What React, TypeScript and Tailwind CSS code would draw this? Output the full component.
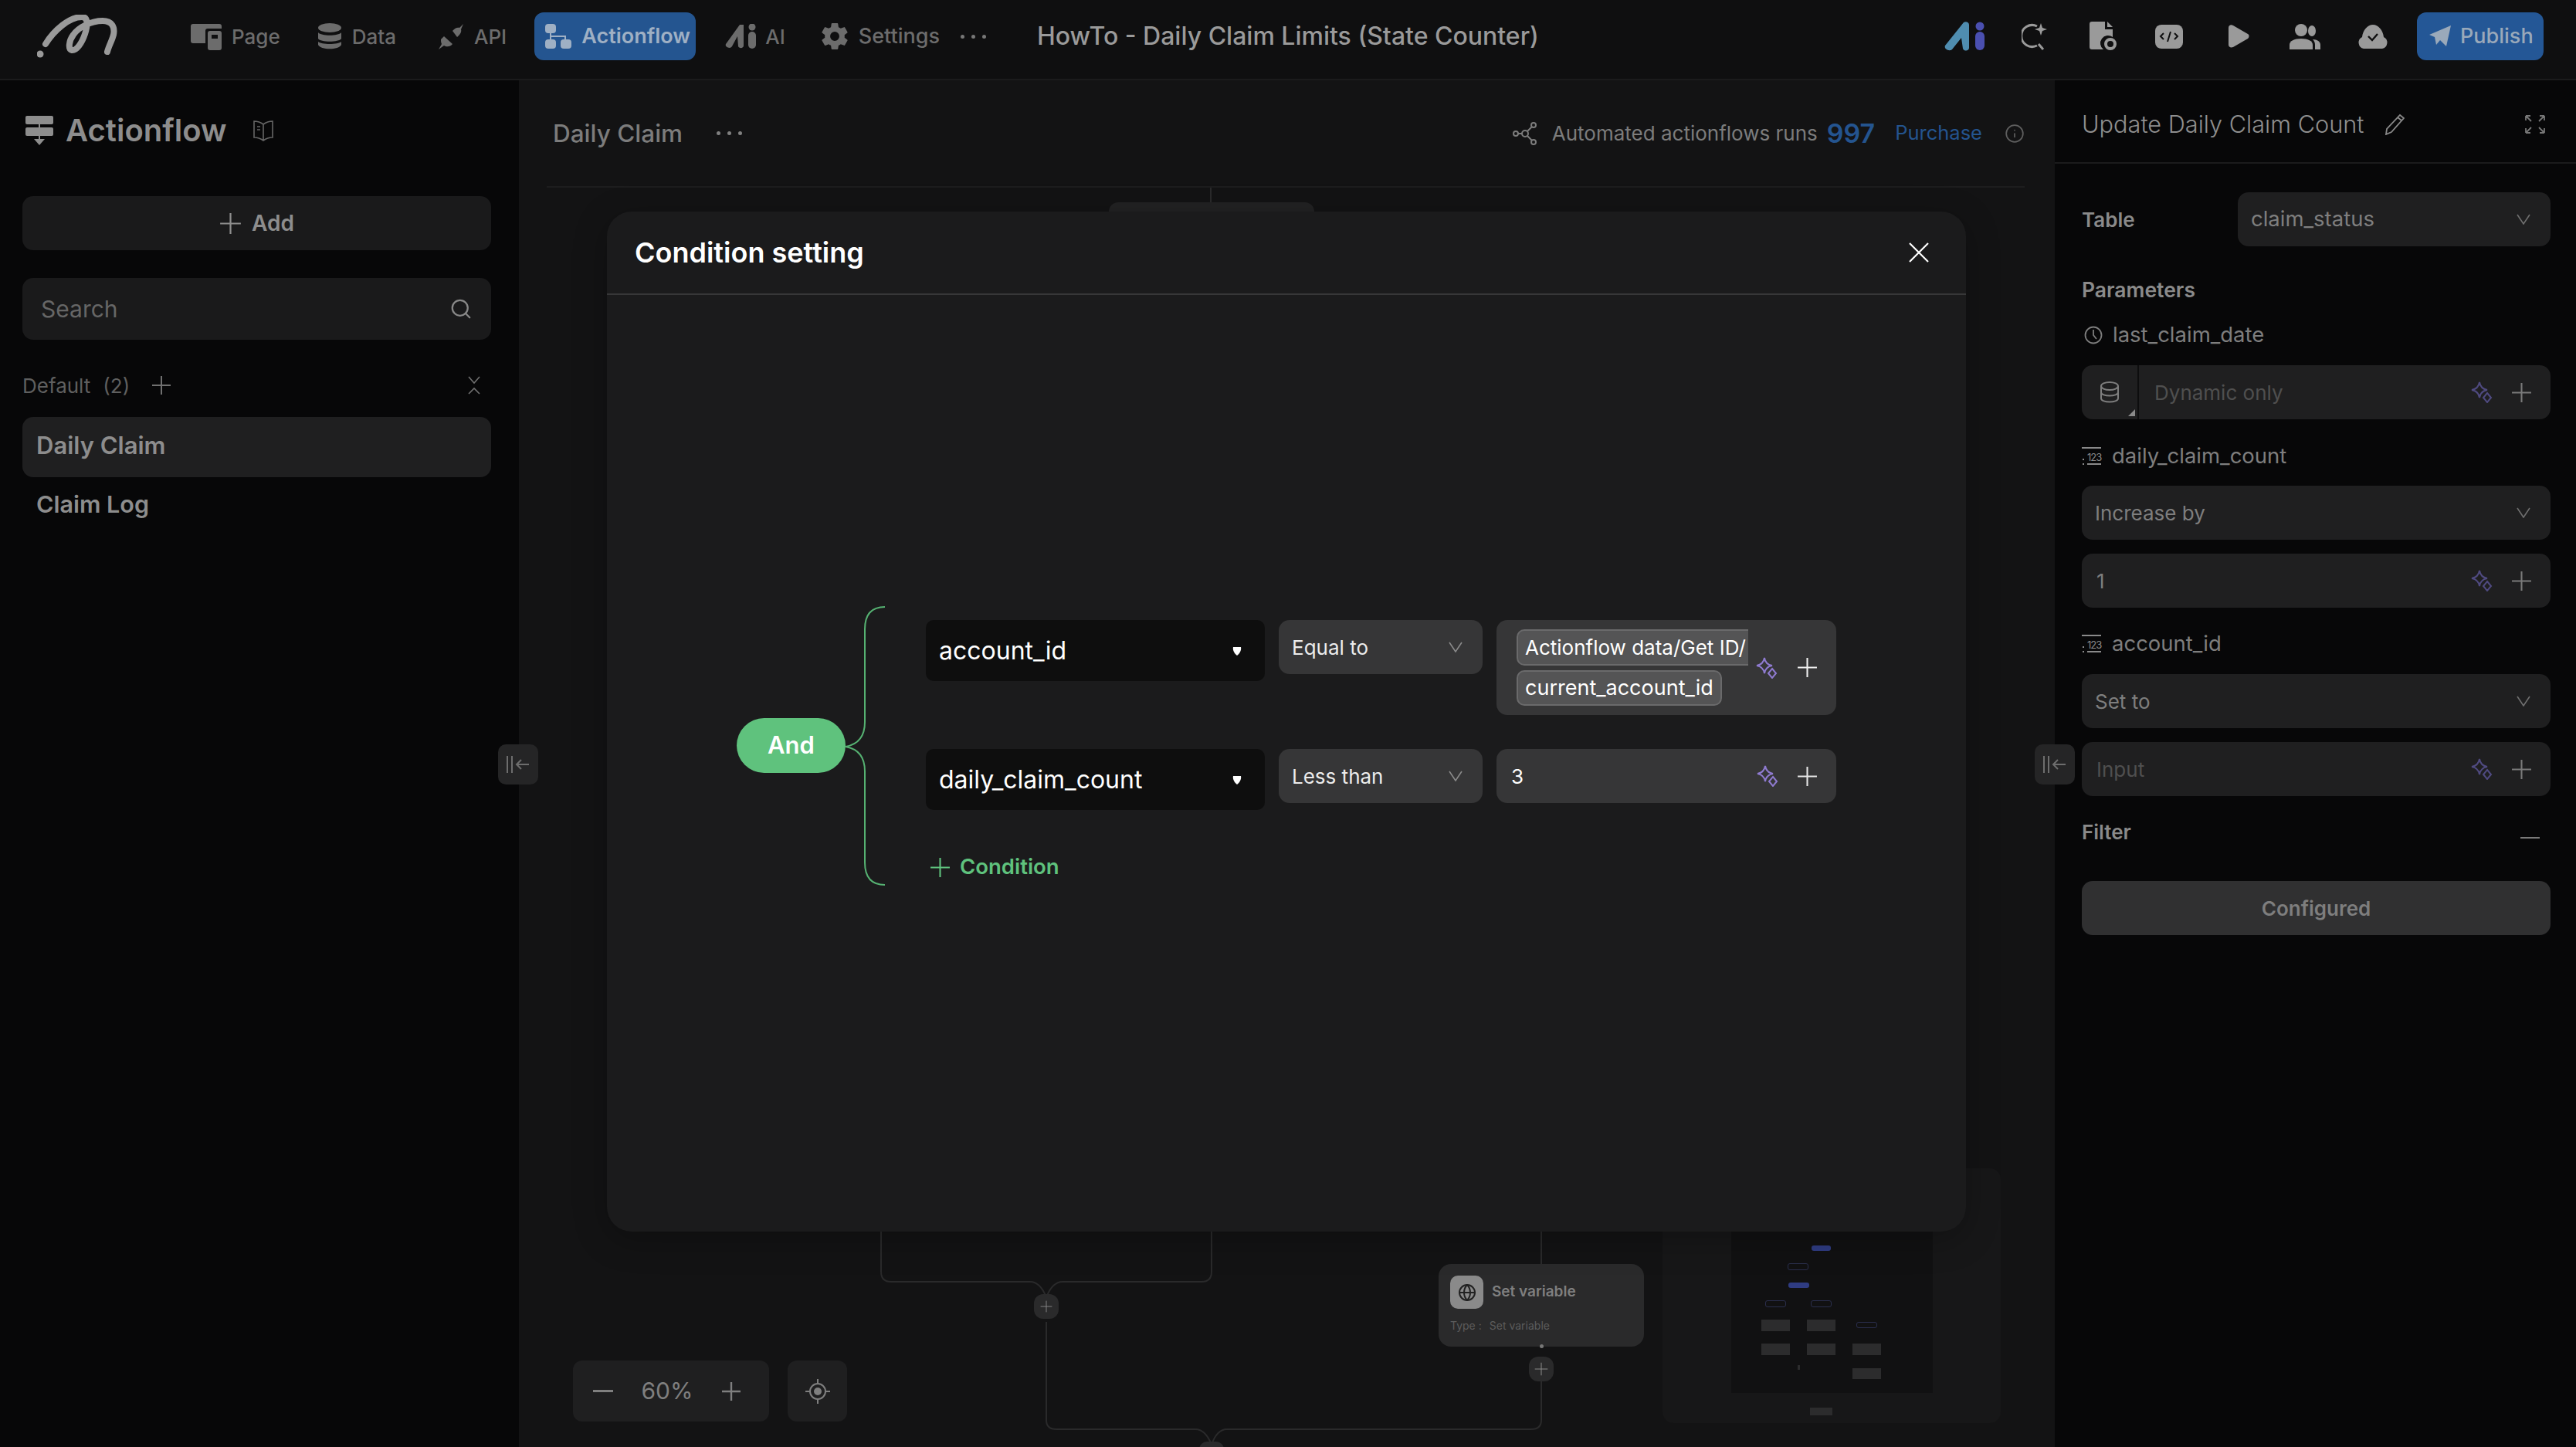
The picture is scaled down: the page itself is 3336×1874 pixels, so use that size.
import { Globe, Info, Search } from 'lucide-react';
import { IoSettingsSharp } from 'react-icons/io5';

function PlusIcon({ size = 26, color = '#9a9a9a', sw = 2 }: { size?: number; color?: string; sw?: number }) {
  return (
    <svg width={size} height={size} viewBox="0 0 26 26" fill="none" stroke={color} strokeWidth={sw} className="shrink-0">
      <path d="M13 1v24M1 13h24" />
    </svg>
  );
}

function Sparkle({ color }: { color: string }) {
  return (
    <svg width="28" height="28" viewBox="0 0 28 28" fill="none" stroke={color} strokeWidth="2" className="shrink-0">
      <path d="M11 1c1 6 4 9 10 10-6 1-9 4-10 10-1-6-4-9-10-10 6-1 9-4 10-10z" />
      <path d="M21 15l5 6-5 6-5-6z" />
    </svg>
  );
}

function Chevron({ color = '#6f6f6f' }: { color?: string }) {
  return (
    <svg width="18" height="14" viewBox="0 0 18 14" fill="none" stroke={color} strokeWidth="1.6" className="shrink-0">
      <path d="M1 1l8 12 8-12" />
    </svg>
  );
}

function NumberIcon() {
  return (
    <div className="relative h-[24px] w-[28px] shrink-0 text-[#8a8a8a]">
      <div className="absolute left-0 top-0 h-[2px] w-[25px] bg-[#8a8a8a]" />
      <div className="absolute bottom-[7px] left-[1px] h-[2px] w-[2px] bg-[#8a8a8a]" />
      <div className="absolute bottom-[1px] left-[1px] h-[2px] w-[2px] bg-[#8a8a8a]" />
      <span className="absolute bottom-[1px] left-[7px] border-b-2 border-[#8a8a8a] text-[13px] leading-[15px] tracking-[-1px]">123</span>
    </div>
  );
}

function Logo() {
  return (
    <svg width="104" height="56" viewBox="0 0 104 56" fill="none" stroke="#9a9a9a" strokeLinecap="round" className="shrink-0">
      <circle cx="4" cy="51" r="4.5" fill="#9a9a9a" stroke="none" />
      <path d="M11 38C22 20 42 3 58 3c8 0 8 10 4 22-4 12-11 22-17 21-5-1-4-12 2-20C54 16 70 8 85 8c12 0 16 8 14 18-2 8-6 14-8 22" strokeWidth="8" />
    </svg>
  );
}

function NavIcon({ name }: { name: string }) {
  const c = '#6c6c6c';
  if (name === 'Page')
    return (
      <svg width="40" height="36" viewBox="0 0 40 36" fill={c} className="shrink-0">
        <path d="M3 2h34a3 3 0 013 3v3H22a3 3 0 00-3 3v16H3a3 3 0 01-3-3V5a3 3 0 013-3z" />
        <rect x="22" y="11" width="18" height="25" rx="3" />
        <rect x="27" y="16" width="8" height="5" fill="#0f0f10" />
      </svg>
    );
  if (name === 'Data')
    return (
      <svg width="32" height="34" viewBox="0 0 32 34" fill={c} className="shrink-0">
        <ellipse cx="16" cy="6" rx="15" ry="6" />
        <path d="M1 12c4 5 26 5 30 0v8c-3 5-27 5-30 0zM1 24c4 4 26 4 30 0v4c-3 7-27 7-30 0z" />
      </svg>
    );
  if (name === 'API')
    return (
      <svg width="34" height="34" viewBox="0 0 34 34" fill={c} className="shrink-0">
        <path d="M19 10c3-4 7-5 9-4l5-5-3 7c1 3-1 7-5 10z" />
        <path d="M4 21l4-4 11 10c-3 4-8 4-11 2l-7 5 4-7c-1-2-1-4-1-6z" />
      </svg>
    );
  if (name === 'Actionflow')
    return (
      <svg width="34" height="32" viewBox="0 0 34 32" fill="#9fb0c4" stroke="none" className="shrink-0">
        <rect x="0" y="0" width="14" height="12" rx="4" />
        <rect x="0" y="20" width="14" height="12" rx="4" />
        <rect x="20" y="20" width="14" height="12" rx="4" />
        <path d="M6 10h2v5h19v6h-2v-4H8v4H6z" />
      </svg>
    );
  if (name === 'AI')
    return (
      <svg width="41" height="32" viewBox="0 0 41 32" fill={c} className="shrink-0">
        <path d="M19 1h5v27c0 4-6 4-7 1l-1-13-7 13c-2 4-10 1-8-3z" />
        <rect x="30" y="10" width="10" height="22" rx="5" />
        <circle cx="35" cy="4" r="4.5" />
      </svg>
    );
  return <IoSettingsSharp size={38} color={c} className="shrink-0" />;
}

function TopIcon({ name }: { name: string }) {
  const c = '#9a9a9a';
  if (name === 'ai')
    return (
      <svg width="54" height="38" viewBox="0 0 54 38" className="shrink-0">
        <path d="M25 1c3-2 7 0 7 3v30c0 4-6 5-8 1l-2-14-12 15c-3 3-11 0-9-5z" fill="#4f8db0" />
        <rect x="40" y="13" width="12" height="24" rx="6" fill="#4a4fb0" />
        <circle cx="46" cy="6" r="5.5" fill="#4a4fb0" />
      </svg>
    );
  if (name === 'search')
    return (
      <svg width="34" height="36" viewBox="0 0 34 36" fill="none" stroke={c} strokeWidth="3" className="ml-[46px] shrink-0">
        <path d="M20 5a14 14 0 100 25" />
        <path d="M22 28l6 7" />
        <path d="M25 1l2 6 6 2-6 2-2 6-2-6-6-2 6-2z" fill={c} stroke="none" />
      </svg>
    );
  if (name === 'doc')
    return (
      <svg width="36" height="38" viewBox="0 0 36 38" fill={c} className="ml-[54px] shrink-0">
        <path d="M3 0h17v10h10v10a10 10 0 00-12 16H3a3 3 0 01-3-3V3a3 3 0 013-3z" />
        <path d="M23 0l7 7h-7z" />
        <circle cx="27" cy="29" r="6" fill="none" stroke={c} strokeWidth="4" />
      </svg>
    );
  if (name === 'code')
    return (
      <svg width="36" height="31" viewBox="0 0 36 31" className="ml-[49px] shrink-0">
        <rect width="36" height="31" rx="8" fill={c} />
        <path d="M11 11l-4 4 4 4M25 11l4 4-4 4M20 9l-4 13" fill="none" stroke="#0f0f10" strokeWidth="2" />
      </svg>
    );
  if (name === 'play')
    return (
      <svg width="27" height="30" viewBox="0 0 27 30" fill={c} className="ml-[59px] shrink-0">
        <path d="M0 4c0-3 3-5 6-3l19 11c2 1 2 4 0 6L6 29c-3 1-6 0-6-3z" />
      </svg>
    );
  if (name === 'users')
    return (
      <svg width="40" height="33" viewBox="0 0 40 33" fill={c} className="ml-[52px] shrink-0">
        <ellipse cx="15" cy="8" rx="8" ry="8" />
        <path d="M0 33v-6c0-5 6-8 15-8s15 3 15 8v6z" />
        <ellipse cx="29" cy="9" rx="5" ry="7" />
        <path d="M33 33v-6c0-3-1-5-3-7 6 0 10 3 10 7v6z" />
      </svg>
    );
  return (
    <svg width="40" height="31" viewBox="0 0 40 31" className="ml-[48px] shrink-0">
      <path d="M8 31a8 8 0 01-2-15C7 7 13 0 20 0s13 7 14 16a8 8 0 01-2 15z" fill={c} />
      <path d="M14 15l5 5 7-8" fill="none" stroke="#0f0f10" strokeWidth="2.4" />
    </svg>
  );
}

const navItems = [
  { name: 'Page', gap: 'mr-[48px]' },
  { name: 'Data', gap: 'mr-[54px]' },
  { name: 'API', gap: 'mr-[36px]' },
];

function TopBar() {
  return (
    <div className="flex h-[104px] shrink-0 items-center border-b-2 border-[#1b1b1c] bg-[#0f0f10] pb-[8px] pl-[48px] pr-[42px]">
      <div className="mr-[95px]">
        <Logo />
      </div>
      {navItems.map(item => (
        <div key={item.name} className={`flex items-center gap-[13px] text-[26px] font-medium text-[#6c6c6c] ${item.gap}`}>
          <NavIcon name={item.name} />
          {item.name}
        </div>
      ))}
      <div className="mr-[38px] flex h-[62px] w-[209px] items-center gap-[13px] rounded-[12px] bg-[#245590] pl-[14px] text-[27px] font-semibold text-[#9fb0c4]">
        <NavIcon name="Actionflow" />
        Actionflow
      </div>
      <div className="mr-[45px] flex items-center gap-[11px] text-[26px] font-medium text-[#6c6c6c]">
        <NavIcon name="AI" />
        AI
      </div>
      <div className="mr-[27px] flex items-center gap-[12px] text-[27px] font-medium text-[#6c6c6c]">
        <NavIcon name="Settings" />
        Settings
      </div>
      <div className="mr-[66px] flex gap-[9px]">
        <span className="h-[5px] w-[5px] rounded-full bg-[#777]" />
        <span className="h-[5px] w-[5px] rounded-full bg-[#777]" />
        <span className="h-[5px] w-[5px] rounded-full bg-[#777]" />
      </div>
      <div className="text-[32px] font-medium text-[#9a9a9a]">HowTo - Daily Claim Limits (State Counter)</div>
      <div className="ml-auto flex items-center">
        <TopIcon name="ai" />
        <TopIcon name="search" />
        <TopIcon name="doc" />
        <TopIcon name="code" />
        <TopIcon name="play" />
        <TopIcon name="users" />
        <TopIcon name="cloud" />
        <div className="ml-[37px] flex h-[62px] w-[164px] items-center gap-[12px] rounded-[12px] bg-[#245796] pl-[16px] text-[27px] font-medium text-[#9aa9ba]">
          <svg width="28" height="28" viewBox="0 0 28 28" fill="#9aa9ba" className="shrink-0">
            <path d="M0 12L28 0l-6 27-8-8-5 6-2-10z" />
          </svg>
          Publish
        </div>
      </div>
    </div>
  );
}

function Sidebar() {
  return (
    <div className="flex w-[672px] shrink-0 flex-col bg-[#070708] pl-[29px] pr-[36px] pt-[45px]">
      <div className="flex h-[40px] items-center pl-[4px]">
        <svg width="36" height="38" viewBox="0 0 36 38" fill="#8d8d8d" className="mr-[16px] shrink-0">
          <rect y="0" width="36" height="11" rx="2" />
          <rect y="15" width="36" height="11" rx="2" />
          <path d="M17 10h2v20h6l-7 8-7-8h6z" />
        </svg>
        <span className="text-[40px] font-semibold leading-none text-[#8d8d8d]">Actionflow</span>
        <svg width="28" height="28" viewBox="0 0 28 28" fill="none" stroke="#666" strokeWidth="1.6" className="ml-[33px] shrink-0">
          <path d="M14 6C10 3 6 2 2 2v21c4 0 8 1 12 4 4-3 8-4 12-4V2c-4 0-8 1-12 4zM14 6v21M6 9h4M6 13h4" />
        </svg>
      </div>
      <div className="mt-[65px] flex h-[70px] items-center justify-center gap-[13px] rounded-[14px] bg-[#1a1a1b] text-[28px] font-semibold text-[#8d8d8d]">
        <PlusIcon size={29} color="#8d8d8d" sw={2} />
        Add
      </div>
      <div className="mt-[36px] flex h-[80px] items-center justify-between rounded-[14px] bg-[#1a1a1b] pl-[24px] pr-[24px] text-[30px] text-[#666]">
        Search
        <Search size={30} color="#888" strokeWidth={1.8} />
      </div>
      <div className="mt-[39px] flex h-[40px] items-center text-[26px] text-[#5f5f5f]">
        Default
        <span className="ml-[16px]">(2)</span>
        <span className="ml-[28px]">
          <PlusIcon size={26} color="#707070" />
        </span>
        <svg width="16" height="24" viewBox="0 0 16 24" fill="none" stroke="#707070" strokeWidth="1.6" className="ml-auto mr-[14px]">
          <path d="M1 1l7 8 7-8M1 23l7-7 7 7" />
        </svg>
      </div>
      <div className="mt-[21px] flex h-[78px] items-center rounded-[14px] bg-[#1f1f20] pb-[4px] pl-[18px] text-[31px] font-semibold text-[#8d8d8d]">Daily Claim</div>
      <div className="flex h-[70px] items-center pl-[18px] text-[30.5px] font-semibold text-[#8d8d8d]">Claim Log</div>
    </div>
  );
}

function CanvasHeader() {
  return (
    <div className="absolute left-[36px] right-[39px] top-[0px] flex h-[139px] items-center border-b-2 border-[#1d1d1e] pl-[8px]">
      <span className="text-[31.5px] font-medium text-[#7c7c7c]">Daily Claim</span>
      <div className="ml-[44px] flex gap-[9px]">
        <span className="h-[5px] w-[5px] rounded-full bg-[#808080]" />
        <span className="h-[5px] w-[5px] rounded-full bg-[#808080]" />
        <span className="h-[5px] w-[5px] rounded-full bg-[#808080]" />
      </div>
      <div className="ml-auto flex items-center">
        <svg width="32" height="30" viewBox="0 0 32 30" fill="none" stroke="#7c7c7c" strokeWidth="2" className="mr-[19px]">
          <circle cx="4" cy="15" r="3" />
          <circle cx="16" cy="15" r="4" />
          <circle cx="27" cy="4" r="3" />
          <circle cx="27" cy="26" r="3" />
          <path d="M7 15h5M19 12l6-6M19 18l6 6" />
        </svg>
        <span className="mr-[12px] text-[26px] text-[#7c7c7c]">Automated actionflows runs</span>
        <span className="mr-[26px] text-[34px] font-semibold text-[#24548f]">997</span>
        <span className="mr-[29px] text-[25.5px] text-[#24548f]">Purchase</span>
        <Info size={26} color="#5f5f5f" strokeWidth={1.6} />
      </div>
    </div>
  );
}

function CanvasFlow() {
  // Backdrop diagram of the flow, dimmed under the dialog; coordinates are relative to the canvas
  return (
    <>
      <svg width="1989" height="1770" viewBox="0 0 1989 1770" fill="none" stroke="#2a2a2b" strokeWidth="2" className="absolute left-0 top-0">
        <path d="M896 139v20" />
        <path d="M469 1491v52q0 13 13 13h180q13 0 21 20M897 1491v52q0 13-13 13H704q-13 0-21 20" />
        <path d="M683 1608v127q0 12 13 12h180q13 0 21 20M1324 1491v42M1324 1685v50q0 12-13 12H917q-13 0-20 20" />
      </svg>
      <div className="absolute left-[764px] top-[158px] h-[60px] w-[266px] rounded-t-[12px] bg-[#222223]" />
      <div className="absolute left-[667px] top-[1572px] flex h-[32px] w-[32px] items-center justify-center rounded-[12px] bg-[#2a2a2b]">
        <PlusIcon size={16} color="#8a8a8a" sw={1.5} />
      </div>
      <div className="absolute left-[1191px] top-[1533px] h-[107px] w-[266px] rounded-[16px] bg-[#2a2a2b] px-[15px] pt-[15px]">
        <div className="flex items-center gap-[11px]">
          <div className="flex h-[43px] w-[43px] items-center justify-center rounded-[10px] bg-[#8a8a8a]">
            <Globe size={24} color="#222" />
          </div>
          <span className="text-[19px] font-semibold text-[#7f7f7f]">Set variable</span>
        </div>
        <div className="mt-[11px] flex gap-[10px] text-[14px] text-[#5c5c5c]">
          <span>Type :</span>
          <span>Set variable</span>
        </div>
      </div>
      <div className="absolute left-[1322px] top-[1637px] h-[5px] w-[5px] rounded-full bg-[#777]" />
      <div className="absolute left-[1308px] top-[1653px] flex h-[32px] w-[32px] items-center justify-center rounded-[12px] bg-[#2a2a2b]">
        <PlusIcon size={18} color="#8a8a8a" sw={1.5} />
      </div>
      <div className="absolute left-[881px] top-[1763px] h-[20px] w-[32px] rounded-t-[10px] bg-[#2a2a2b]" />
    </>
  );
}

function MiniBlock({ x, y, w, h, kind }: { x: number; y: number; w: number; h: number; kind: 'blue' | 'line' | 'gray' }) {
  const look = kind === 'blue' ? 'rounded-[3px] bg-[#2f3c82]' : kind === 'line' ? 'rounded-[3px] border border-[#2a2e4c]' : 'bg-[#2c2c2d]';
  return <div className={`absolute ${look}`} style={{ left: x, top: y, width: w, height: h }} />;
}

function Minimap() {
  const blocks: { x: number; y: number; w: number; h: number; kind: 'blue' | 'line' | 'gray' }[] = [
    { x: 193, y: 100, w: 25, h: 7, kind: 'blue' },
    { x: 162, y: 123, w: 27, h: 9, kind: 'line' },
    { x: 163, y: 148, w: 27, h: 7, kind: 'blue' },
    { x: 133, y: 171, w: 27, h: 9, kind: 'line' },
    { x: 192, y: 171, w: 27, h: 9, kind: 'line' },
    { x: 128, y: 196, w: 37, h: 15, kind: 'gray' },
    { x: 187, y: 196, w: 37, h: 15, kind: 'gray' },
    { x: 251, y: 199, w: 27, h: 8, kind: 'line' },
    { x: 128, y: 227, w: 37, h: 15, kind: 'gray' },
    { x: 187, y: 227, w: 37, h: 15, kind: 'gray' },
    { x: 246, y: 227, w: 37, h: 15, kind: 'gray' },
    { x: 246, y: 259, w: 37, h: 14, kind: 'gray' },
    { x: 175, y: 255, w: 3, h: 6, kind: 'gray' },
    { x: 191, y: 310, w: 29, h: 10, kind: 'gray' },
  ];
  return (
    <div className="absolute left-[1481px] top-[1409px] h-[330px] w-[438px] overflow-hidden rounded-[14px] bg-[#171718]">
      <div className="absolute left-[89px] top-0 h-[291px] w-[261px] bg-[#111112]" />
      {blocks.map((b, i) => (
        <MiniBlock key={i} {...b} />
      ))}
    </div>
  );
}

function ZoomControls() {
  return (
    <div className="absolute left-[70px] top-[1658px] flex gap-[24px]">
      <div className="flex h-[79px] w-[254px] items-center justify-between rounded-[12px] bg-[#1f1f20] pl-[26px] pr-[36px] text-[30px] text-[#7f7f7f]">
        <div className="h-[3px] w-[26px] bg-[#7f7f7f]" />
        60%
        <PlusIcon size={26} color="#7f7f7f" sw={2.4} />
      </div>
      <div className="flex h-[79px] w-[77px] items-center justify-center rounded-[12px] bg-[#1f1f20]">
        <svg width="32" height="32" viewBox="0 0 32 32" fill="none" stroke="#7f7f7f" strokeWidth="2">
          <circle cx="16" cy="16" r="10" />
          <circle cx="16" cy="16" r="5" fill="#7f7f7f" stroke="none" />
          <path d="M16 0v6M16 26v6M0 16h6M26 16h6" />
        </svg>
      </div>
    </div>
  );
}

function PanelHandle({ left }: { left: string }) {
  return (
    <div className={`absolute top-[964px] flex h-[52px] w-[52px] items-center justify-center rounded-[10px] bg-[#252526] ${left}`}>
      <svg width="32" height="24" viewBox="0 0 32 24" fill="none" stroke="#6d6d6d" strokeWidth="2">
        <path d="M2 1v22M8 1v22M30 12H14M20 6l-6 6 6 6" />
      </svg>
    </div>
  );
}

function FieldIcons({ dim = true }: { dim?: boolean }) {
  return (
    <div className="ml-auto flex items-center gap-[24px] pr-[24px]">
      <Sparkle color={dim ? '#4f4a80' : '#8f7bd0'} />
      <PlusIcon size={27} color={dim ? '#7a7a7a' : '#e6e6e6'} />
    </div>
  );
}

function SelectField({ label, className }: { label: string; className: string }) {
  return (
    <div className={`flex h-[70px] items-center justify-between rounded-[14px] bg-[#1f1f20] pl-[17px] pr-[26px] text-[26px] text-[#7e7e7e] ${className}`}>
      {label}
      <Chevron />
    </div>
  );
}

function InputField({ text, muted, className }: { text: string; muted?: boolean; className: string }) {
  return (
    <div className={`flex h-[70px] items-center rounded-[14px] bg-[#1f1f20] pl-[19px] text-[26px] ${muted ? 'text-[#4f4f4f]' : 'text-[#7e7e7e]'} ${className}`}>
      {text}
      <FieldIcons />
    </div>
  );
}

function RightPanel() {
  return (
    <div className="flex w-[675px] shrink-0 flex-col bg-[#070708]">
      <div className="flex h-[108px] shrink-0 items-center border-b-2 border-[#1b1b1c] pl-[35px] pr-[40px] pt-[8px]">
        <span className="text-[30.7px] font-light text-[#8f8f8f]">Update Daily Claim Count</span>
        <svg width="26" height="28" viewBox="0 0 26 28" fill="none" stroke="#8a8a8a" strokeWidth="1.8" className="ml-[26px]">
          <path d="M20 2l5 4L9 24l-7 3 1-7zM17 5l5 4" />
        </svg>
        <svg width="26" height="24" viewBox="0 0 26 24" fill="none" stroke="#777" strokeWidth="1.8" className="ml-auto">
          <path d="M1 1l7 7M1 1v6M1 1h6M25 1l-7 7M25 1v6M25 1h-6M1 23l7-7M1 23v-6M1 23h6M25 23l-7-7M25 23v-6M25 23h-6" />
        </svg>
      </div>
      <div className="flex flex-col pl-[35px] pr-[33px] pt-[37px]">
        <div className="flex items-center justify-between">
          <span className="text-[26px] font-semibold text-[#8a8a8a]">Table</span>
          <SelectField label="claim_status" className="w-[405px] text-[27.5px]" />
        </div>
        <div className="mt-[38px] h-[36px] text-[26.5px] font-semibold leading-[36px] text-[#8a8a8a]">Parameters</div>
        <div className="mt-[23px] flex h-[36px] items-center gap-[13px] text-[27.5px] text-[#7e7e7e]">
          <svg width="24" height="24" viewBox="0 0 24 24" fill="none" stroke="#7e7e7e" strokeWidth="1.8" className="ml-[3px]">
            <circle cx="12" cy="12" r="10.5" />
            <path d="M12 5v7l4 5" />
          </svg>
          last_claim_date
        </div>
        <div className="mt-[21px] flex h-[70px] overflow-hidden rounded-[14px] bg-[#1f1f20] text-[26px] text-[#4f4f4f]">
          <div className="relative flex w-[74px] shrink-0 items-center justify-center border-r-2 border-[#0d0d0e]">
            <svg width="26" height="28" viewBox="0 0 26 28" fill="none" stroke="#7e7e7e" strokeWidth="2">
              <ellipse cx="13" cy="6" rx="11" ry="5" />
              <path d="M2 6v16c0 6 22 6 22 0V6M2 14c0 6 22 6 22 0" />
            </svg>
            <div className="absolute bottom-[4px] right-[3px] h-0 w-0 border-b-[9px] border-l-[9px] border-b-[#8a8a8a] border-l-transparent" />
          </div>
          <div className="flex flex-1 items-center pl-[20px]">
            Dynamic only
            <FieldIcons />
          </div>
        </div>
        <div className="mt-[30px] flex h-[36px] items-center gap-[11px] text-[27.5px] text-[#7e7e7e]">
          <NumberIcon />
          daily_claim_count
        </div>
        <SelectField label="Increase by" className="mt-[20px]" />
        <InputField text="1" className="mt-[18px]" />
        <div className="mt-[29px] flex h-[36px] items-center gap-[11px] text-[27.5px] text-[#7e7e7e]">
          <NumberIcon />
          account_id
        </div>
        <SelectField label="Set to" className="mt-[21px]" />
        <InputField text="Input" muted className="mt-[18px]" />
        <div className="mt-[28px] flex h-[36px] items-center justify-between pr-[14px] text-[26px] font-semibold text-[#8a8a8a]">
          Filter
          <div className="mt-[16px] h-[2px] w-[25px] bg-[#7a7a7a]" />
        </div>
        <div className="mt-[46px] flex h-[70px] items-center justify-center rounded-[14px] bg-[#303031] text-[26px] font-semibold text-[#7e7e7e]">Configured</div>
      </div>
    </div>
  );
}

function ConditionRow({ field, op, children, tall }: { field: string; op: string; children: React.ReactNode; tall?: boolean }) {
  return (
    <div className="flex items-start gap-[18px]">
      <div className="flex h-[79px] w-[439px] items-center justify-between rounded-[10px] bg-[#0e0e0e] pl-[17px] pr-[30px] text-[32px] text-white">
        {field}
        <svg width="12" height="14" viewBox="0 0 12 14" fill="#fff">
          <path d="M1 2h10c1 4-2 9-5 11C3 11 0 6 1 2z" />
        </svg>
      </div>
      <div className="flex h-[70px] w-[264px] items-center justify-between rounded-[14px] bg-[#363637] pl-[17px] pr-[26px] text-[26px] text-[#ececec]">
        {op}
        <Chevron color="#8a8a8a" />
      </div>
      <div className={`flex w-[440px] items-center rounded-[14px] bg-[#363637] ${tall ? 'h-[123px]' : 'h-[70px]'}`}>{children}</div>
    </div>
  );
}

function ConditionDialog() {
  return (
    <div className="absolute left-[786px] top-[274px] flex h-[1321px] w-[1760px] flex-col rounded-[32px] bg-[#1b1b1c] shadow-[0_10px_44px_rgba(0,0,0,0.25)]">
      <div className="flex h-[108px] shrink-0 items-center justify-between border-b-2 border-[#373738] pl-[36px] pr-[48px]">
        <span className="text-[36px] font-semibold text-white">Condition setting</span>
        <svg width="26" height="26" viewBox="0 0 26 26" fill="none" stroke="#fff" strokeWidth="2.2">
          <path d="M1 1l24 24M25 1L1 25" />
        </svg>
      </div>
      <div className="flex items-start pl-[168px] pt-[403px]">
        <div className="mt-[145px] flex h-[71px] w-[141px] items-center justify-center rounded-full bg-[#5fc27d] text-[31px] font-semibold text-white">And</div>
        <svg width="52" height="362" viewBox="0 0 52 362" fill="none" stroke="#56b272" strokeWidth="2" className="shrink-0">
          <path d="M51 1C34 1 25 10 25 30v120c0 18-8 29-25 32 17 3 25 14 25 32v118c0 19 9 29 26 29" />
        </svg>
        <div className="ml-[52px] mt-[18px] flex flex-col">
          <ConditionRow field="account_id" op="Equal to" tall>
            <div className="flex min-w-0 flex-1 flex-col gap-[6px] overflow-hidden pl-[26px] text-white">
              <span className="w-[320px] rounded-l-[10px] border-2 border-[#6a6a6b] bg-[#545455] py-[4px] pl-[9px] text-[26px] leading-[35px] whitespace-nowrap">Actionflow data/Get ID/</span>
              <span className="w-fit rounded-[10px] border-2 border-[#6a6a6b] bg-[#545455] px-[9px] py-[4px] text-[27px] leading-[34px]">current_account_id</span>
            </div>
            <div className="flex shrink-0 items-center gap-[25px] pl-[10px] pr-[24px]">
              <Sparkle color="#8f7bd0" />
              <PlusIcon size={27} color="#f0f0f0" />
            </div>
          </ConditionRow>
          <div className="h-[44px]" />
          <ConditionRow field="daily_claim_count" op="Less than">
            <span className="pl-[19px] text-[26px] text-white">3</span>
            <FieldIcons dim={false} />
          </ConditionRow>
          <div className="mt-[54px] flex h-[40px] items-center gap-[12px] pl-[5px] text-[27.5px] font-semibold text-[#5fc27d]">
            <PlusIcon size={27} color="#5fc27d" />
            Condition
          </div>
        </div>
      </div>
    </div>
  );
}

export default function App() {
  return (
    <div className="relative flex h-[1874px] w-[3336px] flex-col overflow-hidden bg-[#131314] font-[Inter,sans-serif]">
      <TopBar />
      <div className="flex min-h-0 flex-1">
        <Sidebar />
        <div className="relative min-w-0 flex-1 bg-[#131314]">
          <CanvasHeader />
          <CanvasFlow />
          <Minimap />
          <ZoomControls />
        </div>
        <RightPanel />
      </div>
      <PanelHandle left="left-[645px]" />
      <PanelHandle left="left-[2635px]" />
      <ConditionDialog />
    </div>
  );
}
